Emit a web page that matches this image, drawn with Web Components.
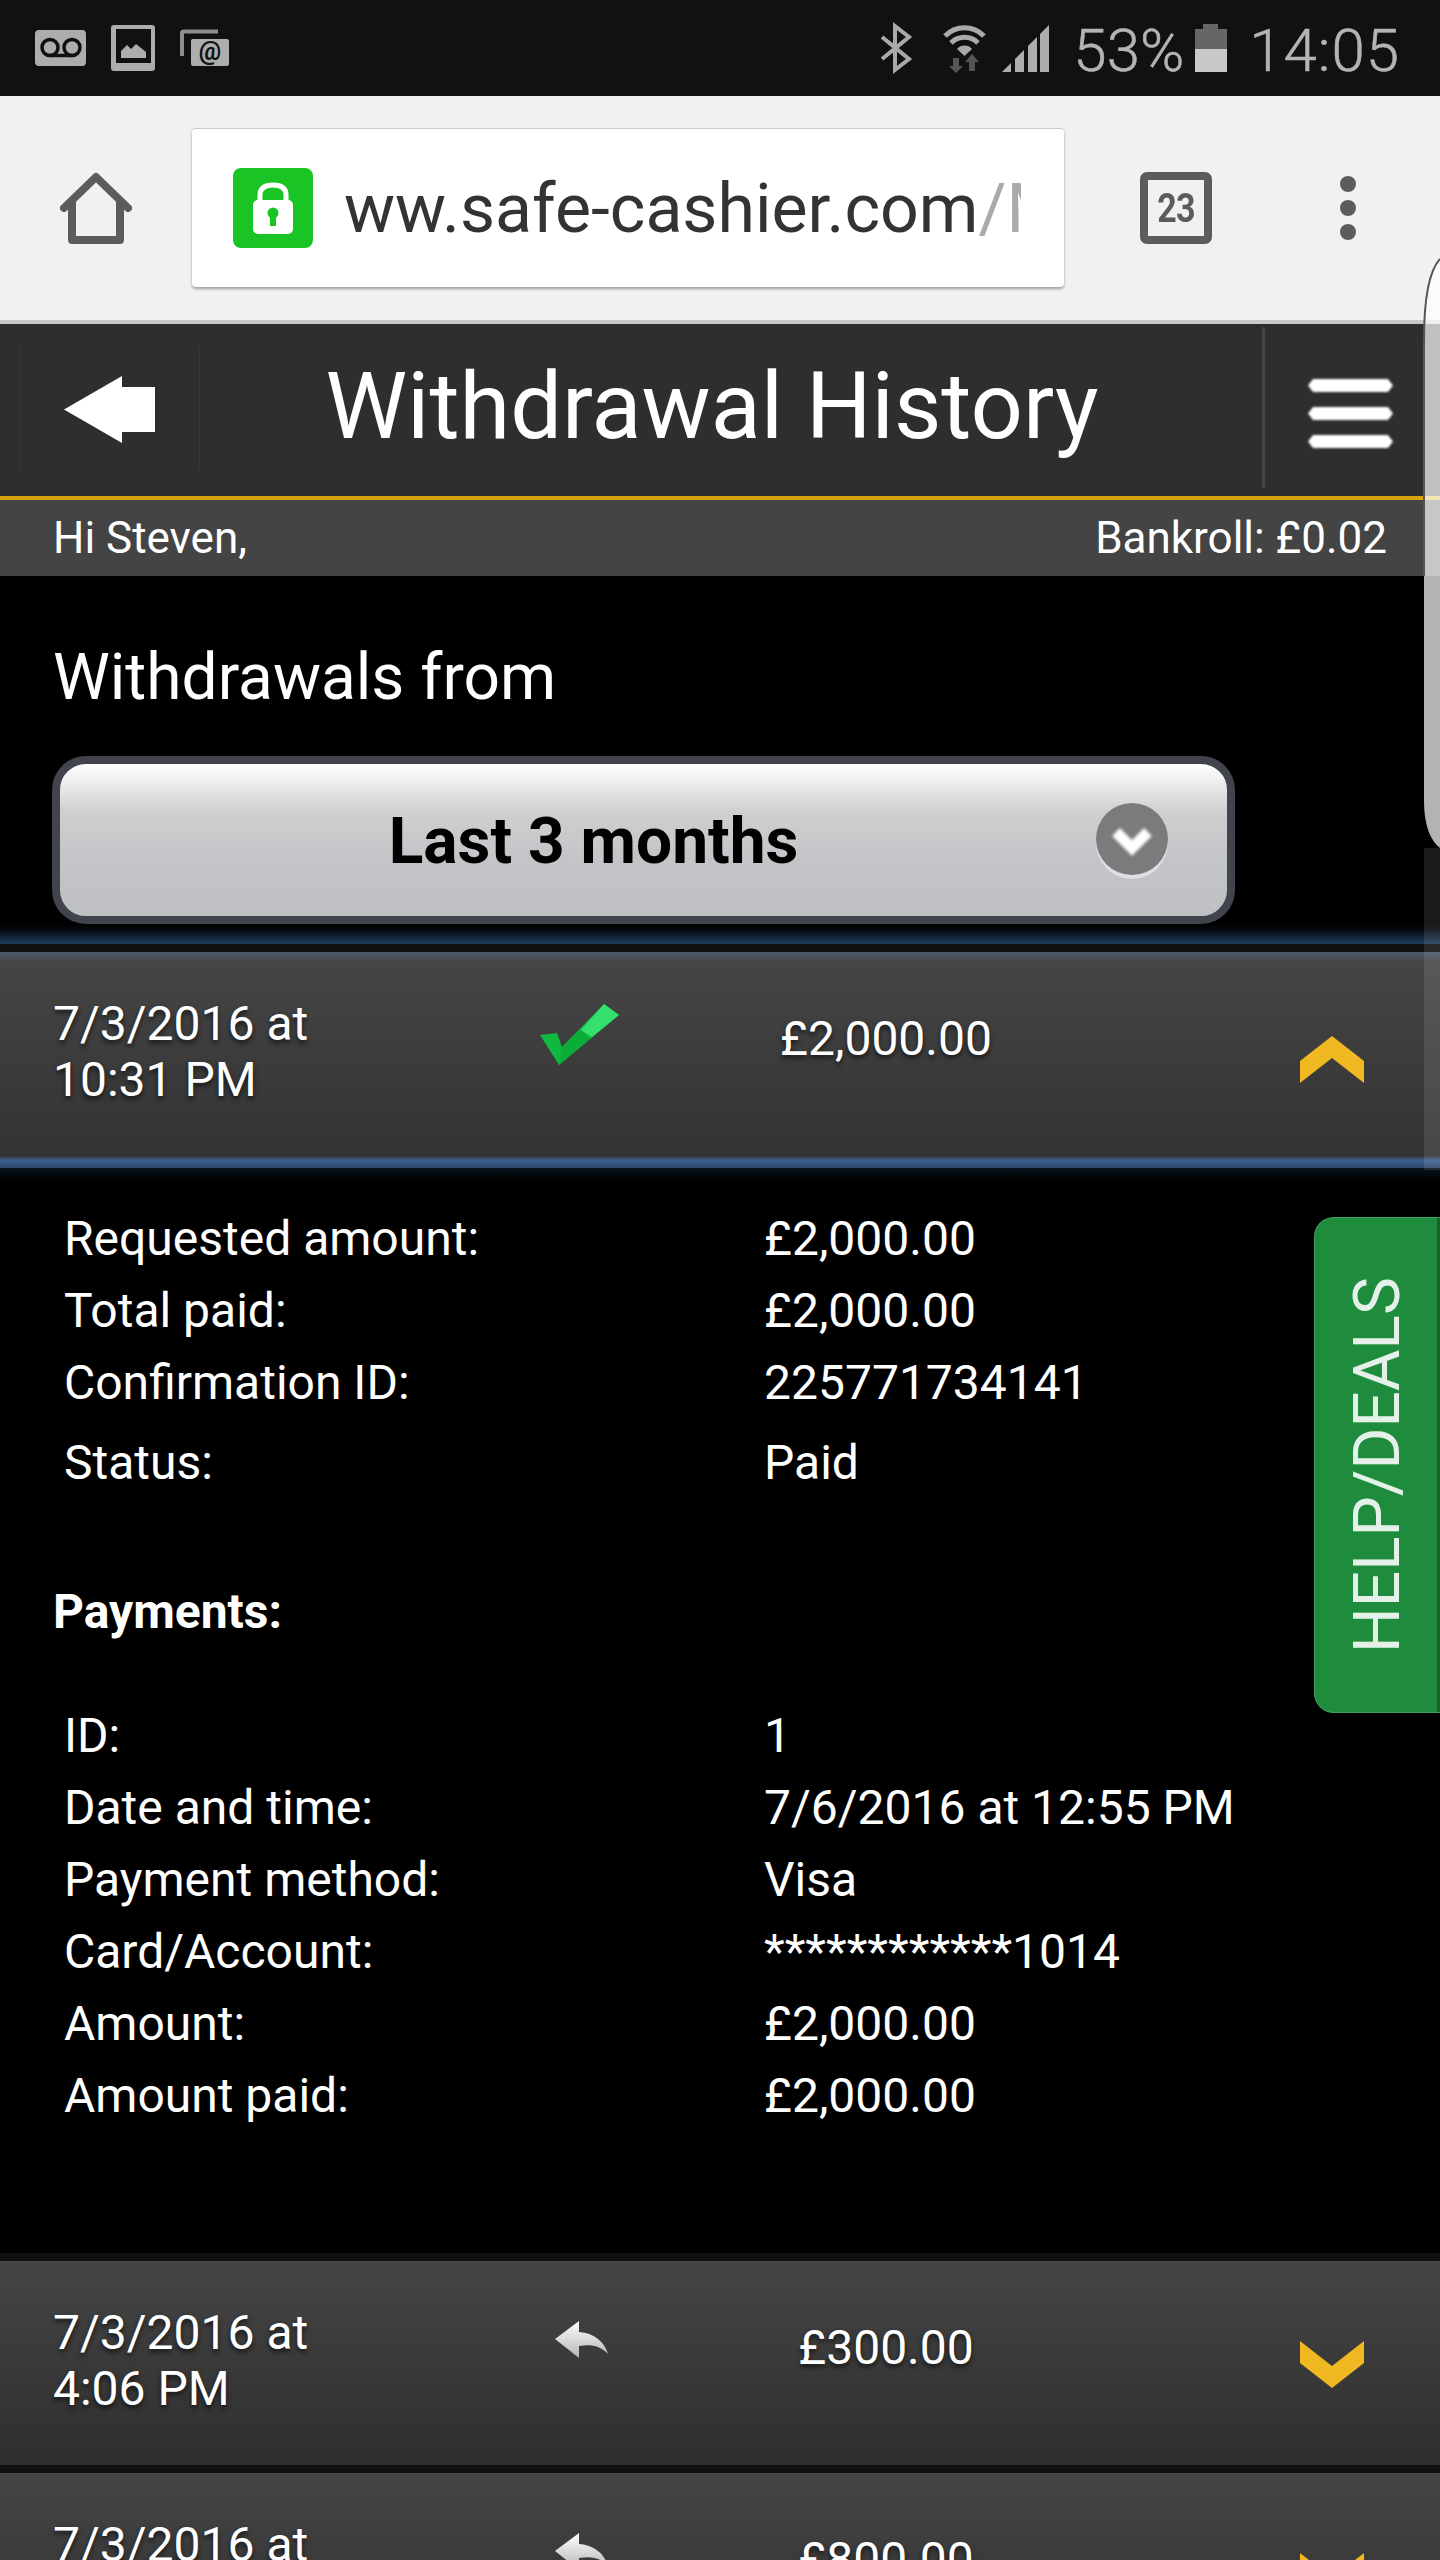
<!DOCTYPE html>
<html lang="en">
<head>
<meta charset="utf-8">
<title>Withdrawal History</title>
<style>
  html, body { margin: 0; padding: 0; background: #000; }
  body { width: 1440px; height: 2560px; overflow: hidden; position: relative; font-family: Roboto, "Liberation Sans", sans-serif; color: #fff; }
</style>
</head>
<body>
  <status-bar></status-bar>
  <browser-bar host-name="ww.safe-cashier.com" path="/M" tabs="23"></browser-bar>
  <page-header heading="Withdrawal History"></page-header>
  <greet-bar name="Hi Steven," bankroll="Bankroll: £0.02"></greet-bar>
  <period-select heading="Withdrawals from" value="Last 3 months"></period-select>

  <withdrawal-row date="7/3/2016 at" time="10:31 PM" amount="£2,000.00" status="paid" open>
    <detail-row label="Requested amount:" value="£2,000.00"></detail-row>
    <detail-row label="Total paid:" value="£2,000.00"></detail-row>
    <detail-row label="Confirmation ID:" value="225771734141"></detail-row>
    <detail-row label="Status:" value="Paid" spaced></detail-row>
    <detail-title>Payments:</detail-title>
    <detail-row label="ID:" value="1"></detail-row>
    <detail-row label="Date and time:" value="7/6/2016 at 12:55 PM"></detail-row>
    <detail-row label="Payment method:" value="Visa"></detail-row>
    <detail-row label="Card/Account:" value="************1014"></detail-row>
    <detail-row label="Amount:" value="£2,000.00"></detail-row>
    <detail-row label="Amount paid:" value="£2,000.00"></detail-row>
  </withdrawal-row>
  <withdrawal-row date="7/3/2016 at" time="4:06 PM" amount="£300.00" status="returned"></withdrawal-row>
  <withdrawal-row date="7/3/2016 at" time="" amount="£800.00" status="returned"></withdrawal-row>

  <help-tab>HELP/DEALS</help-tab>
  <edge-handle></edge-handle>

<script>
  class StatusBar extends HTMLElement {
    constructor() {
      super();
      this.attachShadow({ mode: "open" });
    }

    connectedCallback() {
      this.shadowRoot.innerHTML = `
      <style>
        :host { display: flex; align-items: flex-start; height: 96px; background: #111; color: #b4b4b4; font-family: Roboto, sans-serif; }
        svg { display: block; flex: none; margin-top: 0; }
        .spacer { flex: 1; }
        .pct, .time { font-size: 60px; line-height: 96px; height: 96px; font-weight: 300; flex: none; margin-top: 3px; -webkit-text-stroke: .5px #b4b4b4; }
        .pct { margin-left: 24px; letter-spacing: 0; }
        .time { margin-left: 22px; margin-right: 40px; letter-spacing: 1px; }
      </style>
      <svg width="240" height="96" viewBox="0 0 240 96">
        <rect x="35" y="30" width="51" height="36" rx="4" fill="#adadad"/>
        <g fill="none" stroke="#111" stroke-width="3.5">
          <circle cx="50" cy="47.500" r="8"/>
          <circle cx="72" cy="47.500" r="8"/>
          <path d="M50 55.500H72"/>
        </g>
        <rect x="111" y="25" width="44" height="46" rx="3" fill="#adadad"/>
        <rect x="116" y="29" width="35" height="34" fill="#111"/>
        <path d="M121 58V51L127 45L131 49L136 44L146 52V58Z" fill="#adadad"/>
        <path d="M182 56V33Q182 31.500 184 31.500H218" fill="none" stroke="#8e8e8e" stroke-width="4"/>
        <rect x="191" y="39" width="38" height="27" rx="2" fill="#adadad"/>
        <text x="210" y="60" text-anchor="middle" font-family="Roboto, sans-serif" font-size="25" font-weight="700" fill="#111">@</text>
      </svg>
      <div class="spacer"></div>
      <svg width="180" height="96" viewBox="870 0 180 96" style="margin-right:0">
        <path d="M883 37L910 59L896 70V26L910 37L883 59" fill="none" stroke="#aaa" stroke-width="4"/>
        <g fill="none" stroke="#aaa" stroke-width="5">
          <path d="M946 36A27 27 0 0 1 985 36"/>
          <path d="M952 43A19 19 0 0 1 979 43"/>
        </g>
        <path d="M958 49A10 10 0 0 1 973 49L965.500 56Z" fill="#aaa"/>
        <path d="M954 58H960V66H964L957 73L950 66H954Z" fill="#555"/>
        <path d="M970 71H976V62H980L973 54L966 62H970Z" fill="#555"/>
        <path d="M1003 72L1012 63V72Z" fill="#adadad"/>
        <path d="M1016 59L1025 50V72H1016Z" fill="#adadad"/>
        <path d="M1029 46L1038 37V72H1029Z" fill="#adadad"/>
        <path d="M1041 34L1051 24V72H1041Z" fill="#adadad"/>
      </svg>
      <div class="pct">53%</div>
      <svg width="32" height="96" viewBox="0 0 32 96" style="margin-left:11px">
        <path d="M8 24H23V29H32V49H0V29H8Z" fill="#666"/>
        <rect x="0" y="49" width="32" height="23" fill="#c8c8c8"/>
      </svg>
      <div class="time">14:05</div>`;
    }
  }

  class BrowserBar extends HTMLElement {
    constructor() {
      super();
      this.attachShadow({ mode: "open" });
    }

    connectedCallback() {
      const hostName = this.getAttribute("host-name");
      const path = this.getAttribute("path");
      const tabs = this.getAttribute("tabs");
      this.shadowRoot.innerHTML = `
      <style>
        :host { display: flex; align-items: flex-start; height: 224px; background: #f1f1f1; border-bottom: 4px solid #c9c9c9; font-family: Roboto, sans-serif; }
        svg { display: block; flex: none; }
        .home { margin: 76px 0 0 60px; }
        .url { margin: 32px 0 0 60px; width: 872px; height: 159px; box-sizing: border-box; background: #fff; border-radius: 4px; border-top: 1px solid #ccc; box-shadow: 0 2px 3px rgba(0,0,0,.35); display: flex; align-items: center; padding-left: 41px; }
        .addr { margin-left: 31px; width: 677px; overflow: hidden; white-space: nowrap; font-size: 68px; line-height: 90px; color: #333; margin-top: 2px; }
        .addr span { color: #aaa; }
        .tabs { margin: 76px 0 0 76px; width: 72px; height: 72px; box-sizing: border-box; border: 8px solid #5c5c5c; border-radius: 7px; display: flex; align-items: center; justify-content: center; color: #5c5c5c; font-size: 40px; font-weight: 700; }
        .tabs span { display: block; transform: scaleX(.85); letter-spacing: -1px; }
        .menu { margin: 80px 0 0 128px; display: flex; flex-direction: column; gap: 8px; }
        .menu i { display: block; width: 16px; height: 16px; border-radius: 50%; background: #5c5c5c; }
      </style>
      <svg class="home" width="72" height="72" viewBox="60 172 72 72" fill="none" stroke="#5c5c5c" stroke-width="8" stroke-linecap="round" stroke-linejoin="round">
        <path d="M64 208L96 177L128 208"/>
        <path d="M72 203V240H120V203"/>
      </svg>
      <div class="url">
        <svg width="80" height="80" viewBox="0 0 80 80">
          <rect width="80" height="80" rx="8" fill="#1ac425"/>
          <path d="M27 34V27Q27 17 40 17Q53 17 53 27V34" fill="none" stroke="#fff" stroke-width="5"/>
          <rect x="20" y="32" width="40" height="34" rx="5" fill="#fff"/>
          <circle cx="40" cy="45" r="5.500" fill="#1ac425"/>
          <rect x="37" y="46" width="6" height="12" fill="#1ac425"/>
        </svg>
        <div class="addr">${hostName}<span>${path}</span></div>
      </div>
      <div class="tabs"><span>${tabs}</span></div>
      <div class="menu"><i></i><i></i><i></i></div>`;
    }
  }

  class PageHeader extends HTMLElement {
    constructor() {
      super();
      this.attachShadow({ mode: "open" });
    }

    connectedCallback() {
      this.shadowRoot.innerHTML = `
      <style>
        :host { display: flex; height: 172px; background: #2e2e2e; border-bottom: 4px solid #d9a30f; font-family: Roboto, sans-serif; position: relative; }
        .back { width: 180px; margin: 24px 0 0 20px; height: 120px; box-sizing: border-box; border-left: 1px solid #383838; border-right: 1px solid #383838; flex: none; }
        .back svg { display: block; margin: 28px 0 0 43px; filter: blur(.7px); }
        h1 { flex: 1; margin: -3px 0 0; padding-right: 38px; text-align: center; font-weight: 400; font-size: 92px; line-height: 172px; height: 172px; color: #fff; white-space: nowrap; }
        .menu { width: 178px; margin: 3px 0 8px 0; flex: none; box-sizing: border-box; border-left: 3px solid #444; padding: 52px 0 0 43px; }
        .menu svg { display: block; filter: blur(.8px); }
      </style>
      <div class="back">
        <svg width="91" height="67" viewBox="0 0 91 67"><path d="M0 33.500L58 0V11H91V56H58V67Z" fill="#fff"/></svg>
      </div>
      <h1>${this.getAttribute("heading")}</h1>
      <div class="menu">
        <svg width="85" height="70" viewBox="0 0 85 70" fill="#fff">
          <path d="M5 0H80L85 6.500L80 13H5L0 6.500Z"/>
          <path d="M5 28H80L85 34.500L80 41H5L0 34.500Z"/>
          <path d="M5 56H80L85 62.500L80 69H5L0 62.500Z"/>
        </svg>
      </div>`;
    }
  }

  class GreetBar extends HTMLElement {
    constructor() {
      super();
      this.attachShadow({ mode: "open" });
    }

    connectedCallback() {
      this.shadowRoot.innerHTML = `
      <style>
        :host { display: flex; justify-content: space-between; align-items: center; height: 76px; padding: 0 53px; background: #444; color: #fff; font: 400 44px/74px Roboto, sans-serif; }
      </style>
      <span>${this.getAttribute("name")}</span>
      <span>${this.getAttribute("bankroll")}</span>`;
    }
  }

  class PeriodSelect extends HTMLElement {
    constructor() {
      super();
      this.attachShadow({ mode: "open" });
    }

    connectedCallback() {
      this.shadowRoot.innerHTML = `
      <style>
        :host { display: block; font-family: Roboto, sans-serif; }
        h2 { margin: 0; height: 180px; box-sizing: border-box; padding: 66px 0 0 53px; font-weight: 400; font-size: 64px; line-height: 72px; color: #fff; }
        .box { margin-left: 52px; width: 1183px; height: 168px; box-sizing: border-box; border: 8px solid #41444d; border-radius: 34px; background: linear-gradient(#fff 0%, #cfcfd1 32%, #c4c5c8 60%, #bfc0c4 100%); position: relative; display: flex; align-items: center; justify-content: center; }
        .val { font-weight: 700; font-size: 64px; color: #000; margin-right: 100px; margin-top: 2px; }
        .arrow { position: absolute; left: 1036px; top: 39px; width: 72px; height: 72px; border-radius: 50%; background: #7b7b7d; box-shadow: 0 4px 0 #dedfe1; }
        .arrow svg { display: block; filter: blur(1.5px); }
      </style>
      <h2>${this.getAttribute("heading")}</h2>
      <div class="box">
        <span class="val">${this.getAttribute("value")}</span>
        <div class="arrow">
          <svg width="72" height="72" viewBox="0 0 72 72"><path d="M20 29L36 45L52 29" fill="none" stroke="#fff" stroke-width="11"/></svg>
        </div>
      </div>`;
    }
  }

  class WithdrawalRow extends HTMLElement {
    static get icons() {
      return {
        paid: `<svg width="79" height="61" viewBox="0 0 79 61" style="margin-top:52px;margin-left:40px">
            <path d="M0 31L17 29L22 43L64 0L79 11L19 61Z" fill="#0fb83e"/>
            <path d="M22 43L40 25L50 35L19 61Z" fill="#0aa838" opacity=".7"/>
            <path d="M64 0L79 11L52 33L41 26Z" fill="#35e06e"/>
          </svg>`,
        returned: `<svg width="53" height="37" viewBox="0 0 53 37" style="margin-top:60px;margin-left:55px">
            <defs><linearGradient id="g" x1="0" y1="0" x2="0" y2="1"><stop offset="0" stop-color="#fff"/><stop offset="1" stop-color="#b5b5b5"/></linearGradient></defs>
            <path d="M0 18L24 0V11C40 12 50 22 53 33C45 24 35 23 24 25V37Z" fill="url(#g)"/>
          </svg>`,
      };
    }

    constructor() {
      super();
      this.attachShadow({ mode: "open" });
    }

    connectedCallback() {
      const open = this.hasAttribute("open");
      const status = WithdrawalRow.icons[this.getAttribute("status")];
      const chevron = open
        ? "M0 47L32 22L64 47V25L32 0L0 25Z"
        : "M0 0L32 25L64 0V22L32 47L0 22Z";
      this.shadowRoot.innerHTML = `
      <style>
        :host { display: block; font-family: Roboto, sans-serif; }
        .glow { height: 20px; background: linear-gradient(#000, #04090f 30%, #1d3d5e); }
        .gap { height: 8px; background: #101010; }
        .head { height: 204px; box-sizing: border-box; background: linear-gradient(#454545, #2e2e2e); display: flex; align-items: flex-start; padding-left: 53px; color: #fff; text-shadow: 0 3px 5px rgba(0,0,0,.65); }
        :host([open]) .head { height: 208px; background: linear-gradient(#4b5a6c, #454545 10px, #333 98%, #3f5f86 100%); }
        .blue { height: 8px; background: linear-gradient(#3f6290, #2c4668); }
        .fade { height: 12px; background: linear-gradient(#08121c, #000); }
        .date { width: 447px; flex: none; padding-top: 44px; font-size: 48px; line-height: 56px; white-space: nowrap; }
        .icon { width: 160px; flex: none; }
        .icon svg { display: block; }
        .amount { width: 452px; flex: none; text-align: center; font-size: 48px; line-height: 56px; padding-top: 59px; }
        .chev { margin: 80px 0 0 188px; flex: none; display: block; }
        :host([open]) .chev { margin-top: 84px; }
        .details { padding: 23px 0 121px; background: #000; }
      </style>
      ${open ? '<div class="glow"></div>' : ""}
      <div class="gap"></div>
      <div class="head">
        <div class="date">${this.getAttribute("date")}<br>${this.getAttribute("time")}</div>
        <div class="icon">${status}</div>
        <div class="amount">${this.getAttribute("amount")}</div>
        <svg class="chev" width="64" height="47" viewBox="0 0 64 47"><path d="${chevron}" fill="#f0b922"/></svg>
      </div>
      ${open ? '<div class="blue"></div><div class="fade"></div><div class="details"><slot></slot></div>' : ""}`;
    }
  }

  class DetailRow extends HTMLElement {
    constructor() {
      super();
      this.attachShadow({ mode: "open" });
    }

    connectedCallback() {
      this.shadowRoot.innerHTML = `
      <style>
        :host { display: flex; height: 72px; padding-left: 64px; color: #fff; font: 400 48px/72px Roboto, sans-serif; }
        :host([spaced]) { margin-top: 8px; }
        .label { width: 700px; flex: none; }
      </style>
      <span class="label">${this.getAttribute("label")}</span>
      <span>${this.getAttribute("value")}</span>`;
    }
  }

  class DetailTitle extends HTMLElement {
    constructor() {
      super();
      this.attachShadow({ mode: "open" });
      this.shadowRoot.innerHTML = `
      <style>
        :host { display: block; margin: 77px 0 52px; padding-left: 53px; color: #fff; font: 700 48px/72px Roboto, sans-serif; }
      </style>
      <slot></slot>`;
    }
  }

  class HelpTab extends HTMLElement {
    constructor() {
      super();
      this.attachShadow({ mode: "open" });
      this.shadowRoot.innerHTML = `
      <style>
        :host { position: absolute; left: 1314px; top: 1217px; width: 126px; height: 496px; box-sizing: border-box; background: #1f8c3d; border-radius: 20px 0 0 20px; border: 1px solid #3fa35a; border-right: 0; display: flex; align-items: center; font-family: Roboto, sans-serif; }
        .label { writing-mode: vertical-rl; transform: rotate(180deg); margin-left: 27px; font-size: 64px; line-height: 72px; color: #e4f1e8; white-space: nowrap; filter: blur(.4px); }
        .edge { position: absolute; right: 0; top: 0; bottom: 0; width: 3px; background: #17622c; }
      </style>
      <div class="label"><slot></slot></div>
      <div class="edge"></div>`;
    }
  }

  // the browser's side panel handle, it lies over the page
  class EdgeHandle extends HTMLElement {
    constructor() {
      super();
      this.attachShadow({ mode: "open" });
      this.shadowRoot.innerHTML = `
      <style>
        :host { position: absolute; left: 1420px; top: 250px; width: 20px; height: 930px; display: block; }
        svg { display: block; }
      </style>
      <svg width="20" height="930" viewBox="0 0 20 930">
        <rect x="4" y="598" width="16" height="322" fill="#fff" opacity=".1"/>
        <path d="M20 9C8 22 4 50 4 90V550C4 575 10 590 20 598Z" fill="#fff" opacity=".7"/>
        <path d="M20 9C8 22 4 50 4 90V326" fill="none" stroke="#555" stroke-width="2"/>
      </svg>`;
    }
  }

  customElements.define("status-bar", StatusBar);
  customElements.define("browser-bar", BrowserBar);
  customElements.define("page-header", PageHeader);
  customElements.define("greet-bar", GreetBar);
  customElements.define("period-select", PeriodSelect);
  customElements.define("withdrawal-row", WithdrawalRow);
  customElements.define("detail-row", DetailRow);
  customElements.define("detail-title", DetailTitle);
  customElements.define("help-tab", HelpTab);
  customElements.define("edge-handle", EdgeHandle);
</script>
</body>
</html>
